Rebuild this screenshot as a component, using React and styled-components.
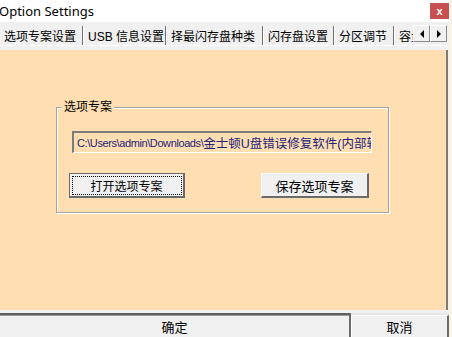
import React from "react";
import styled, { createGlobalStyle, css } from "styled-components";

const GlobalStyle = createGlobalStyle`
  html, body { margin: 0; padding: 0; background: #fbf4ea; }
  body { font-family: "Liberation Sans", "Noto Sans CJK SC", sans-serif; }
  #root { width: 452px; height: 337px; overflow: hidden; }
  * { box-sizing: border-box; }
`;

const Window = styled.div`
  width: 449px;
  height: 337px;
  display: flex;
  flex-direction: column;
  background: #f0f0f0;
  overflow: hidden;
`;

const TitleBar = styled.div`
  flex: none;
  height: 22px;
  background: #fff;
  display: flex;
  align-items: flex-start;
  justify-content: space-between;
`;

const Title = styled.div`
  font-family: "Noto Sans", "Open Sans", sans-serif;
  font-size: 13px;
  line-height: 22px;
  color: #000;
  margin-left: -1px;
`;

const CloseButton = styled.div`
  width: 19px;
  height: 16px;
  margin-top: 3px;
  background: #c75050;
  color: #fff;
  font: bold 11px/16px "Liberation Sans", sans-serif;
  text-align: center;
`;

const TabStrip = styled.div`
  flex: none;
  height: 23px;
  display: flex;
  align-items: flex-start;
`;

const TabViewport = styled.div`
  flex: 1;
  align-self: stretch;
  display: flex;
  align-items: flex-end;
  overflow: hidden;
`;

const Tab = styled.div`
  flex: none;
  width: ${(p) => p.$w}px;
  height: 19px;
  display: flex;
  align-items: center;
  padding-left: 4px;
  font-size: 12px;
  color: #000;
  white-space: nowrap;
  overflow: hidden;
  border-right: 1px solid #6f6f6f;
  ${(p) =>
    !p.$first &&
    css`
      border-left: 1px solid #ffffff;
    `}
`;

const ArrowGroup = styled.div`
  flex: none;
  display: flex;
  margin-top: 3px;
  margin-right: 2px;
`;

const ArrowButton = styled.div`
  width: 17px;
  height: 17px;
  background: #f0f0f0;
  border: 1px solid;
  border-color: #ffffff #8a8a8a #8a8a8a #ffffff;
  display: flex;
  align-items: center;
  justify-content: center;
`;

const Triangle = styled.span`
  width: 0;
  height: 0;
  border-top: 4px solid transparent;
  border-bottom: 4px solid transparent;
  ${(p) =>
    p.$dir === "left"
      ? css`
          border-right: 4px solid #000;
        `
      : css`
          border-left: 4px solid #000;
        `}
`;

const Frame = styled.div`
  flex: 1;
  display: flex;
  flex-direction: column;
  border-top: 1px solid #ffffff;
  padding: 4px 1px 3px 0;
  background: #f0f0f0;
`;

const Panel = styled.div`
  flex: 1;
  background: #ffdfb1;
  border-right: 2px solid #7a7a7a;
  padding: 50px 0 0 56px;
`;

const Group = styled.fieldset`
  width: 333px;
  margin: 0;
  padding: 0 0 14px 0;
  border: 1px solid #a3a3a3;
  box-shadow: inset 1px 1px 0 #ffffff, 1px 1px 0 #ffffff;
  min-inline-size: auto;
`;

const GroupLegend = styled.legend`
  margin-left: 5px;
  padding: 0 2px;
  font-size: 12px;
  line-height: 14px;
  background: #ffdfb1;
  color: #000;
`;

const PathField = styled.div`
  width: 300px;
  height: 22px;
  margin: 17px 0 0 15px;
  padding-left: 3px;
  border-style: solid;
  border-width: 2px 1px 1px 2px;
  border-color: #7c7c7c #ffffff #ffffff #7c7c7c;
  background: #ffdfb1;
  color: #23237a;
  white-space: nowrap;
  overflow: hidden;
  display: flex;
  align-items: center;
`;

const PathLatin = styled.span`
  font-family: "Liberation Sans", sans-serif;
  font-size: 11px;
  letter-spacing: -0.4px;
`;

const PathCJK = styled.span`
  font-family: "Liberation Sans", "Noto Sans CJK SC", sans-serif;
  font-size: 12.5px;
`;

const ButtonRow = styled.div`
  display: flex;
  justify-content: space-between;
  margin-top: 20px;
  padding: 0 19px 0 12px;
`;

const PushButton = styled.button`
  width: ${(p) => p.$w}px;
  height: 25px;
  margin: 0;
  padding: 0;
  background: #f0f0f0;
  color: #000;
  font-family: "Liberation Sans", "Noto Sans CJK SC", sans-serif;
  font-size: ${(p) => p.$fs}px;
  border-style: solid;
  border-width: 1px 2px 2px 1px;
  border-color: #ffffff #6a6a6a #6a6a6a #ffffff;
  ${(p) =>
    p.$default &&
    css`
      border-color: #6a6a6a;
      outline: 1px dotted #000;
      outline-offset: -4px;
    `}
`;

const Footer = styled.div`
  flex: none;
  height: 24px;
  display: flex;
  background: #e6e6e6;
`;

const OkButton = styled.div`
  width: 351px;
  border-top: 2px solid #5f5f5f;
  box-shadow: inset 0 1px 0 #9a9a9a;
  border-right: 2px solid #6b6b6b;
  background: #f0f0f0;
  font-size: 13px;
  display: flex;
  align-items: center;
  justify-content: center;
  padding-top: 1px;
  color: #000;
`;

const CancelButton = styled.div`
  flex: 1;
  margin-top: 2px;
  border-top: 1px solid #ffffff;
  border-left: 1px solid #ffffff;
  border-right: 2px solid #6b6b6b;
  background: #f0f0f0;
  font-size: 13px;
  display: flex;
  align-items: center;
  justify-content: center;
  color: #000;
`;

const tabs = [
  { label: "选项专案设置", w: 83 },
  { label: "USB 信息设置", w: 83 },
  { label: "择最闪存盘种类", w: 97 },
  { label: "闪存盘设置", w: 71 },
  { label: "分区调节", w: 60 },
  { label: "容量设置", w: 60 },
];

export default function App() {
  return (
    <>
      <GlobalStyle />
      <Window>
        <TitleBar>
          <Title>Option Settings</Title>
          <CloseButton>x</CloseButton>
        </TitleBar>
        <TabStrip>
          <TabViewport>
            {tabs.map((t, i) => (
              <Tab key={t.label} $w={t.w} $first={i === 0}>
                {t.label}
              </Tab>
            ))}
          </TabViewport>
          <ArrowGroup>
            <ArrowButton>
              <Triangle $dir="left" />
            </ArrowButton>
            <ArrowButton>
              <Triangle $dir="right" />
            </ArrowButton>
          </ArrowGroup>
        </TabStrip>
        <Frame>
          <Panel>
            <Group>
              <GroupLegend>选项专案</GroupLegend>
              <PathField>
                <PathLatin>C:\Users\admin\Downloads\</PathLatin>
                <PathCJK>金士顿U盘错误修复软件(内部转</PathCJK>
              </PathField>
              <ButtonRow>
                <PushButton $w={116} $fs={12} $default>
                  打开选项专案
                </PushButton>
                <PushButton $w={108} $fs={13}>
                  保存选项专案
                </PushButton>
              </ButtonRow>
            </Group>
          </Panel>
        </Frame>
        <Footer>
          <OkButton>确定</OkButton>
          <CancelButton>取消</CancelButton>
        </Footer>
      </Window>
    </>
  );
}
